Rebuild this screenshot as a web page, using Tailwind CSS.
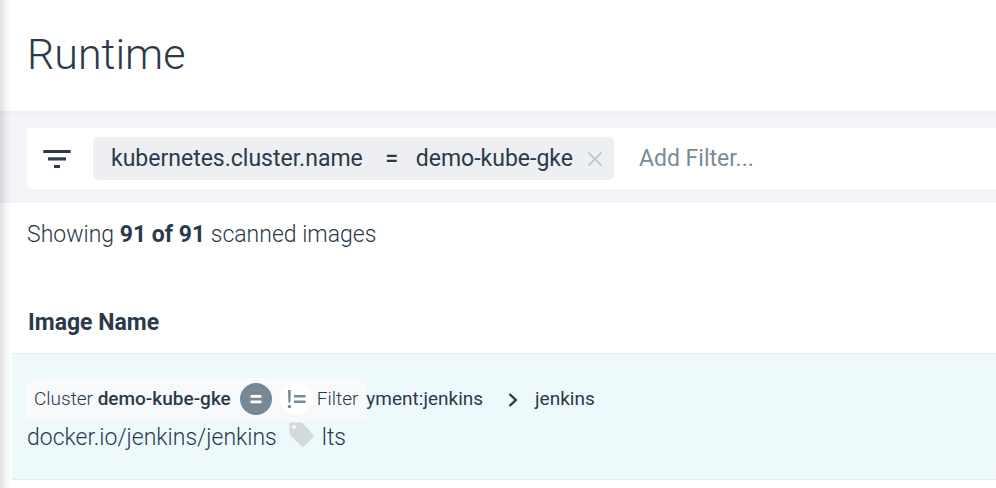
<!DOCTYPE html>
<html lang="en">
<head>
<meta charset="utf-8">
<meta name="viewport" content="width=device-width, initial-scale=1">
<title>Runtime</title>
<script src="https://cdn.jsdelivr.net/npm/@tailwindcss/browser@4"></script>
</head>
<body class="relative min-h-screen overflow-x-hidden bg-white font-['Roboto',sans-serif] text-[#2a3a4a]">
<header class="px-[27px] pt-7 pb-[31px]">
  <h1 class="text-[43px] leading-[52px] font-light">Runtime</h1>
</header>
<main>
  <section class="border-t-2 border-[#eceef0] bg-[#f3f4f7] pt-[15px] pb-[14px] pl-[27px]" aria-label="Filters">
    <form class="flex items-center rounded-l bg-white py-[9px]">
      <svg class="ml-4 h-[18px] w-7 shrink-0" viewBox="0 0 28 18" fill="#2b3a4e" aria-hidden="true">
        <rect x="0.3" y="0" width="27.4" height="3"/><rect x="5" y="7.3" width="18" height="3.2"/><rect x="11" y="15" width="6" height="3"/>
      </svg>
      <div class="ml-[22px] flex h-[43px] shrink-0 items-center rounded-[5px] bg-[#edeff3] pr-3 pl-[18px] text-[23px] leading-8">
        <span>kubernetes.cluster.name</span>
        <span class="mr-[18px] ml-[23px] flex w-3 justify-center font-medium">=</span>
        <span>demo-kube-gke</span>
        <button type="button" class="ml-[15px] flex" aria-label="Remove filter">
          <svg class="h-[14px] w-[14px]" viewBox="0 0 14 14" fill="none" stroke="#b7c4cc" stroke-width="1.6" aria-hidden="true"><path d="M.5.5l13 13M13.500.5l-13 13"/></svg>
        </button>
      </div>
      <input type="text" aria-label="Add filter" placeholder="Add Filter..." class="ml-[25px] min-w-0 flex-1 text-[23px] leading-8 outline-none placeholder:text-[#7a8a96]">
    </form>
  </section>
  <p class="px-[27px] pt-4 text-[23px] leading-8 font-light">Showing <strong class="font-bold">91 of 91</strong> scanned images</p>
  <div class="pt-14 pl-3">
    <table class="w-full border-collapse text-left">
      <thead>
        <tr><th scope="col" class="px-4 pb-[14px] text-[23px] leading-8 font-bold">Image Name</th></tr>
      </thead>
      <tbody>
        <tr class="border-y border-[#e3ecf0] bg-[#eef9fc]">
          <td class="px-[14px] pt-6 pb-[25px]">
            <div class="flex items-center text-[19px] leading-6">
              <div class="flex h-[43px] items-center bg-[#f8f9fb] px-2 pb-0.5">
                <span class="font-light">Cluster <b class="font-medium">demo-kube-gke</b></span>
                <button type="button" aria-label="Filter by equals" class="ml-[9px] flex h-8 w-8 items-center justify-center rounded-full bg-[#788894]">
                  <svg class="h-8 w-8" viewBox="0 0 32 32" fill="#fff" aria-hidden="true"><path d="M10.500 12h11v2.800h-11zM10.500 17.500h11v2.800h-11z"/></svg>
                </button>
                <button type="button" aria-label="Filter by not equals" class="ml-2 flex h-8 w-8 items-center justify-center rounded-full bg-white">
                  <svg class="h-8 w-8" viewBox="0 0 32 32" fill="#788894" aria-hidden="true"><path d="M8 7h2.800l-.4 12.500H8.400zM14 12h11.500v2.500H14zM14 17.500h11.500v2.500H14z"/><circle cx="9.400" cy="23.500" r="1.700"/></svg>
                </button>
                <span class="ml-[5px] font-light">Filter</span>
              </div>
              <span class="pb-0.5">yment:jenkins</span>
              <svg class="mr-[17px] ml-[25px] h-[14px] w-2.5 shrink-0" viewBox="0 0 10 14" fill="none" stroke="#2a3a4a" stroke-width="2.400" aria-hidden="true"><path d="M1.500 1l6.300 6-6.300 6"/></svg>
              <span class="pb-0.5">jenkins</span>
            </div>
            <div class="flex items-center pt-px pl-px text-[23px] leading-8 font-light">
              <span>docker.io/jenkins/jenkins</span>
              <svg class="mr-2 mb-1.5 ml-3 h-[26px] w-[25px] shrink-0" viewBox="0 0 25 26" aria-hidden="true"><path fill="#d3d9df" fill-rule="evenodd" d="M2 .5h9.500c.8 0 1.500.3 2 .8l10.700 11.200c.8.800.8 2 0 2.800l-8.800 9c-.8.800-2 .8-2.800 0L1.200 13c-.5-.5-.8-1.200-.8-2V2C.4 1.200 1.100.5 2 .5zM5 3a1.900 1.900 0 1 0 0 3.800A1.900 1.900 0 0 0 5 3z"/></svg>
              <span>lts</span>
            </div>
          </td>
        </tr>
      </tbody>
    </table>
  </div>
</main>
<div class="pointer-events-none absolute inset-y-0 left-0 w-3 bg-linear-to-r from-black/12 via-black/4 to-transparent" aria-hidden="true"></div>
</body>
</html>
